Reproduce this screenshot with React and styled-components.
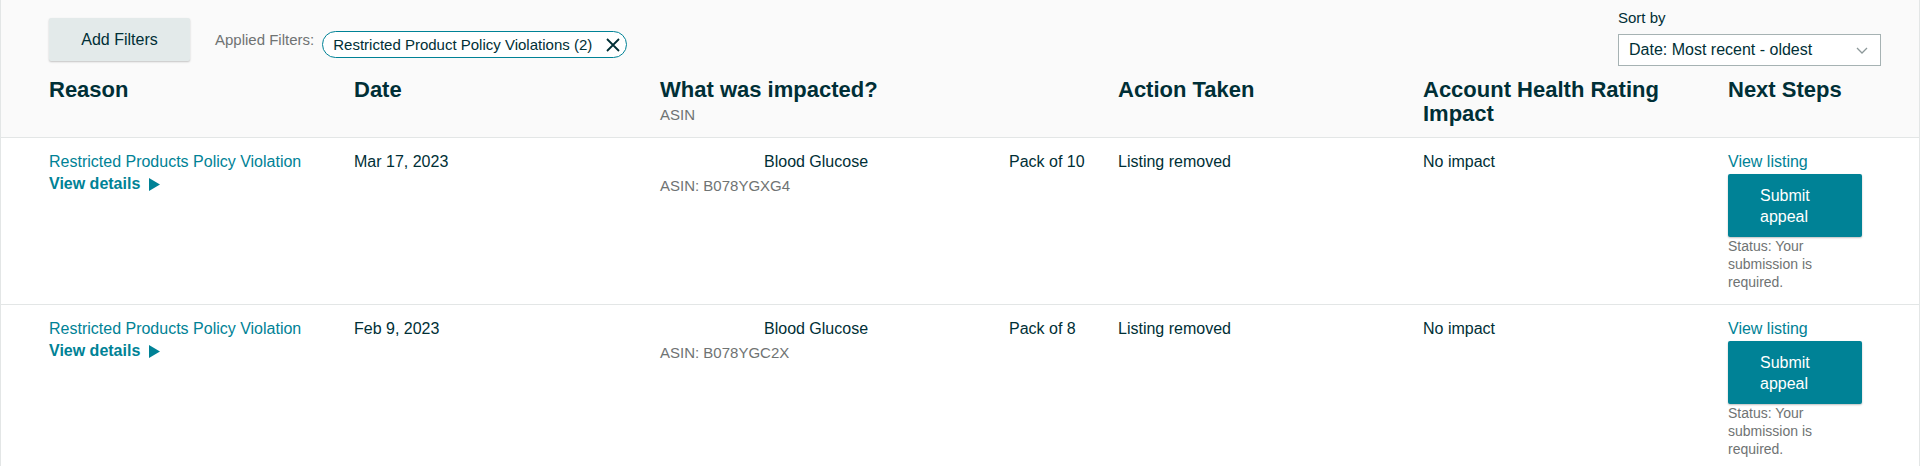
import React from 'react'
import styled, { createGlobalStyle } from 'styled-components'

const GlobalStyle = createGlobalStyle`
  body {
    margin: 0;
    background: #ffffff;
    font-family: 'Liberation Sans', Arial, sans-serif;
    color: #002f36;
  }
`

const columns = '305px 306px 458px 305px 305px 134px'

const HeaderPanel = styled.div`
  background: #fafafa;
  border: 1px solid #e3e6e6;
  border-top: none;
  padding: 9px 38px 11px 48px;
`

const FilterBar = styled.div`
  display: flex;
  justify-content: space-between;
  align-items: flex-start;
`

const FilterGroup = styled.div`
  display: flex;
  align-items: center;
  margin-top: 9px;
`

const AddFilters = styled.button`
  width: 141px;
  height: 43px;
  background: #e3eaea;
  border: none;
  border-radius: 2px;
  box-shadow: 0 1px 2px rgba(0, 0, 0, 0.22);
  font-family: inherit;
  font-size: 16px;
  color: #002f36;
  cursor: pointer;
`

const AppliedLabel = styled.span`
  margin-left: 25px;
  font-size: 15px;
  line-height: 18px;
  color: #6f7373;
`

const Pill = styled.span`
  display: inline-flex;
  align-items: center;
  height: 27px;
  box-sizing: border-box;
  margin: 10px 0 0 8px;
  padding: 0 6px 0 10px;
  border: 1px solid #008296;
  border-radius: 14px;
  background: #ffffff;
  font-size: 15px;
  color: #002f36;
  gap: 14px;
`

const SortGroup = styled.div`
  display: flex;
  flex-direction: column;
  gap: 7px;
`

const SortLabel = styled.span`
  font-size: 15px;
  line-height: 18px;
`

const Select = styled.div`
  width: 263px;
  height: 32px;
  box-sizing: border-box;
  display: flex;
  align-items: center;
  justify-content: space-between;
  padding: 0 12px 0 10px;
  background: #ffffff;
  border: 1px solid #a6b2b3;
  font-size: 16px;
`

const HeadGrid = styled.div`
  display: grid;
  grid-template-columns: ${columns};
  margin-top: 12px;
`

const HeadCell = styled.div`
  font-size: 22px;
  line-height: 24px;
  font-weight: 700;
  padding-right: 12px;
`

const SubLabel = styled.div`
  margin-top: 4px;
  font-size: 15px;
  line-height: 18px;
  font-weight: 400;
  color: #6f7373;
`

const Row = styled.div`
  display: grid;
  grid-template-columns: ${columns};
  align-items: start;
  padding: 13px 38px 13px 48px;
  border: 1px solid #e3e6e6;
  border-top: none;
  font-size: 16px;
  line-height: 22px;
`

const Cell = styled.div`
  display: flex;
  flex-direction: column;
  align-items: flex-start;
`

const Link = styled.a`
  color: #008296;
  text-decoration: none;
  font-weight: ${(p) => (p.$bold ? 700 : 400)};
  display: inline-flex;
  align-items: center;
  gap: 9px;
  cursor: pointer;
`

const ProductLine = styled.div`
  display: flex;
`

const Thumb = styled.span`
  width: 104px;
  flex: none;
`

const ProductName = styled.span`
  width: 245px;
  flex: none;
`

const Asin = styled.div`
  margin-top: 2px;
  font-size: 15px;
  color: #6f7373;
`

const SubmitButton = styled.button`
  margin-top: 1px;
  width: 134px;
  height: 63px;
  padding: 0 32px;
  text-align: left;
  background: #008296;
  color: #ffffff;
  border: none;
  border-radius: 2px;
  box-shadow: 0 1px 2px rgba(0, 0, 0, 0.25);
  font-family: inherit;
  font-size: 16px;
  line-height: 21px;
  cursor: pointer;
`

const Status = styled.div`
  width: 134px;
  font-size: 14px;
  line-height: 18px;
  color: #6f7373;
`

const CloseIcon = () => (
  <svg width="14" height="14" viewBox="0 0 14 14">
    <path d="M1 1 L13 13 M13 1 L1 13" stroke="#002f36" strokeWidth="1.8" fill="none" />
  </svg>
)

const Chevron = () => (
  <svg width="12" height="7" viewBox="0 0 12 7">
    <path d="M1 1 L6 6 L11 1" stroke="#8c9899" strokeWidth="1.3" fill="none" />
  </svg>
)

const Caret = () => (
  <svg width="11" height="13" viewBox="0 0 11 13">
    <polygon points="0,0 11,6.5 0,13" fill="#008296" />
  </svg>
)

const violations = [
  { date: 'Mar 17, 2023', asin: 'B078YGXG4', pack: 'Pack of 10' },
  { date: 'Feb 9, 2023', asin: 'B078YGC2X', pack: 'Pack of 8' },
]

export default function App() {
  return (
    <div>
      <GlobalStyle />
      <HeaderPanel>
        <FilterBar>
          <FilterGroup>
            <AddFilters>Add Filters</AddFilters>
            <AppliedLabel>Applied Filters:</AppliedLabel>
            <Pill>
              Restricted Product Policy Violations (2)
              <CloseIcon />
            </Pill>
          </FilterGroup>
          <SortGroup>
            <SortLabel>Sort by</SortLabel>
            <Select>
              Date: Most recent - oldest
              <Chevron />
            </Select>
          </SortGroup>
        </FilterBar>
        <HeadGrid>
          <HeadCell>Reason</HeadCell>
          <HeadCell>Date</HeadCell>
          <HeadCell>
            What was impacted?
            <SubLabel>ASIN</SubLabel>
          </HeadCell>
          <HeadCell>Action Taken</HeadCell>
          <HeadCell>Account Health Rating Impact</HeadCell>
          <HeadCell>Next Steps</HeadCell>
        </HeadGrid>
      </HeaderPanel>
      {violations.map((v) => (
        <Row key={v.asin}>
          <Cell>
            <Link>Restricted Products Policy Violation</Link>
            <Link $bold>
              View details <Caret />
            </Link>
          </Cell>
          <Cell>{v.date}</Cell>
          <Cell>
            <ProductLine>
              <Thumb />
              <ProductName>Blood Glucose</ProductName>
              <span>{v.pack}</span>
            </ProductLine>
            <Asin>ASIN: {v.asin}</Asin>
          </Cell>
          <Cell>Listing removed</Cell>
          <Cell>No impact</Cell>
          <Cell>
            <Link>View listing</Link>
            <SubmitButton>Submit appeal</SubmitButton>
            <Status>Status: Your submission is required.</Status>
          </Cell>
        </Row>
      ))}
    </div>
  )
}
